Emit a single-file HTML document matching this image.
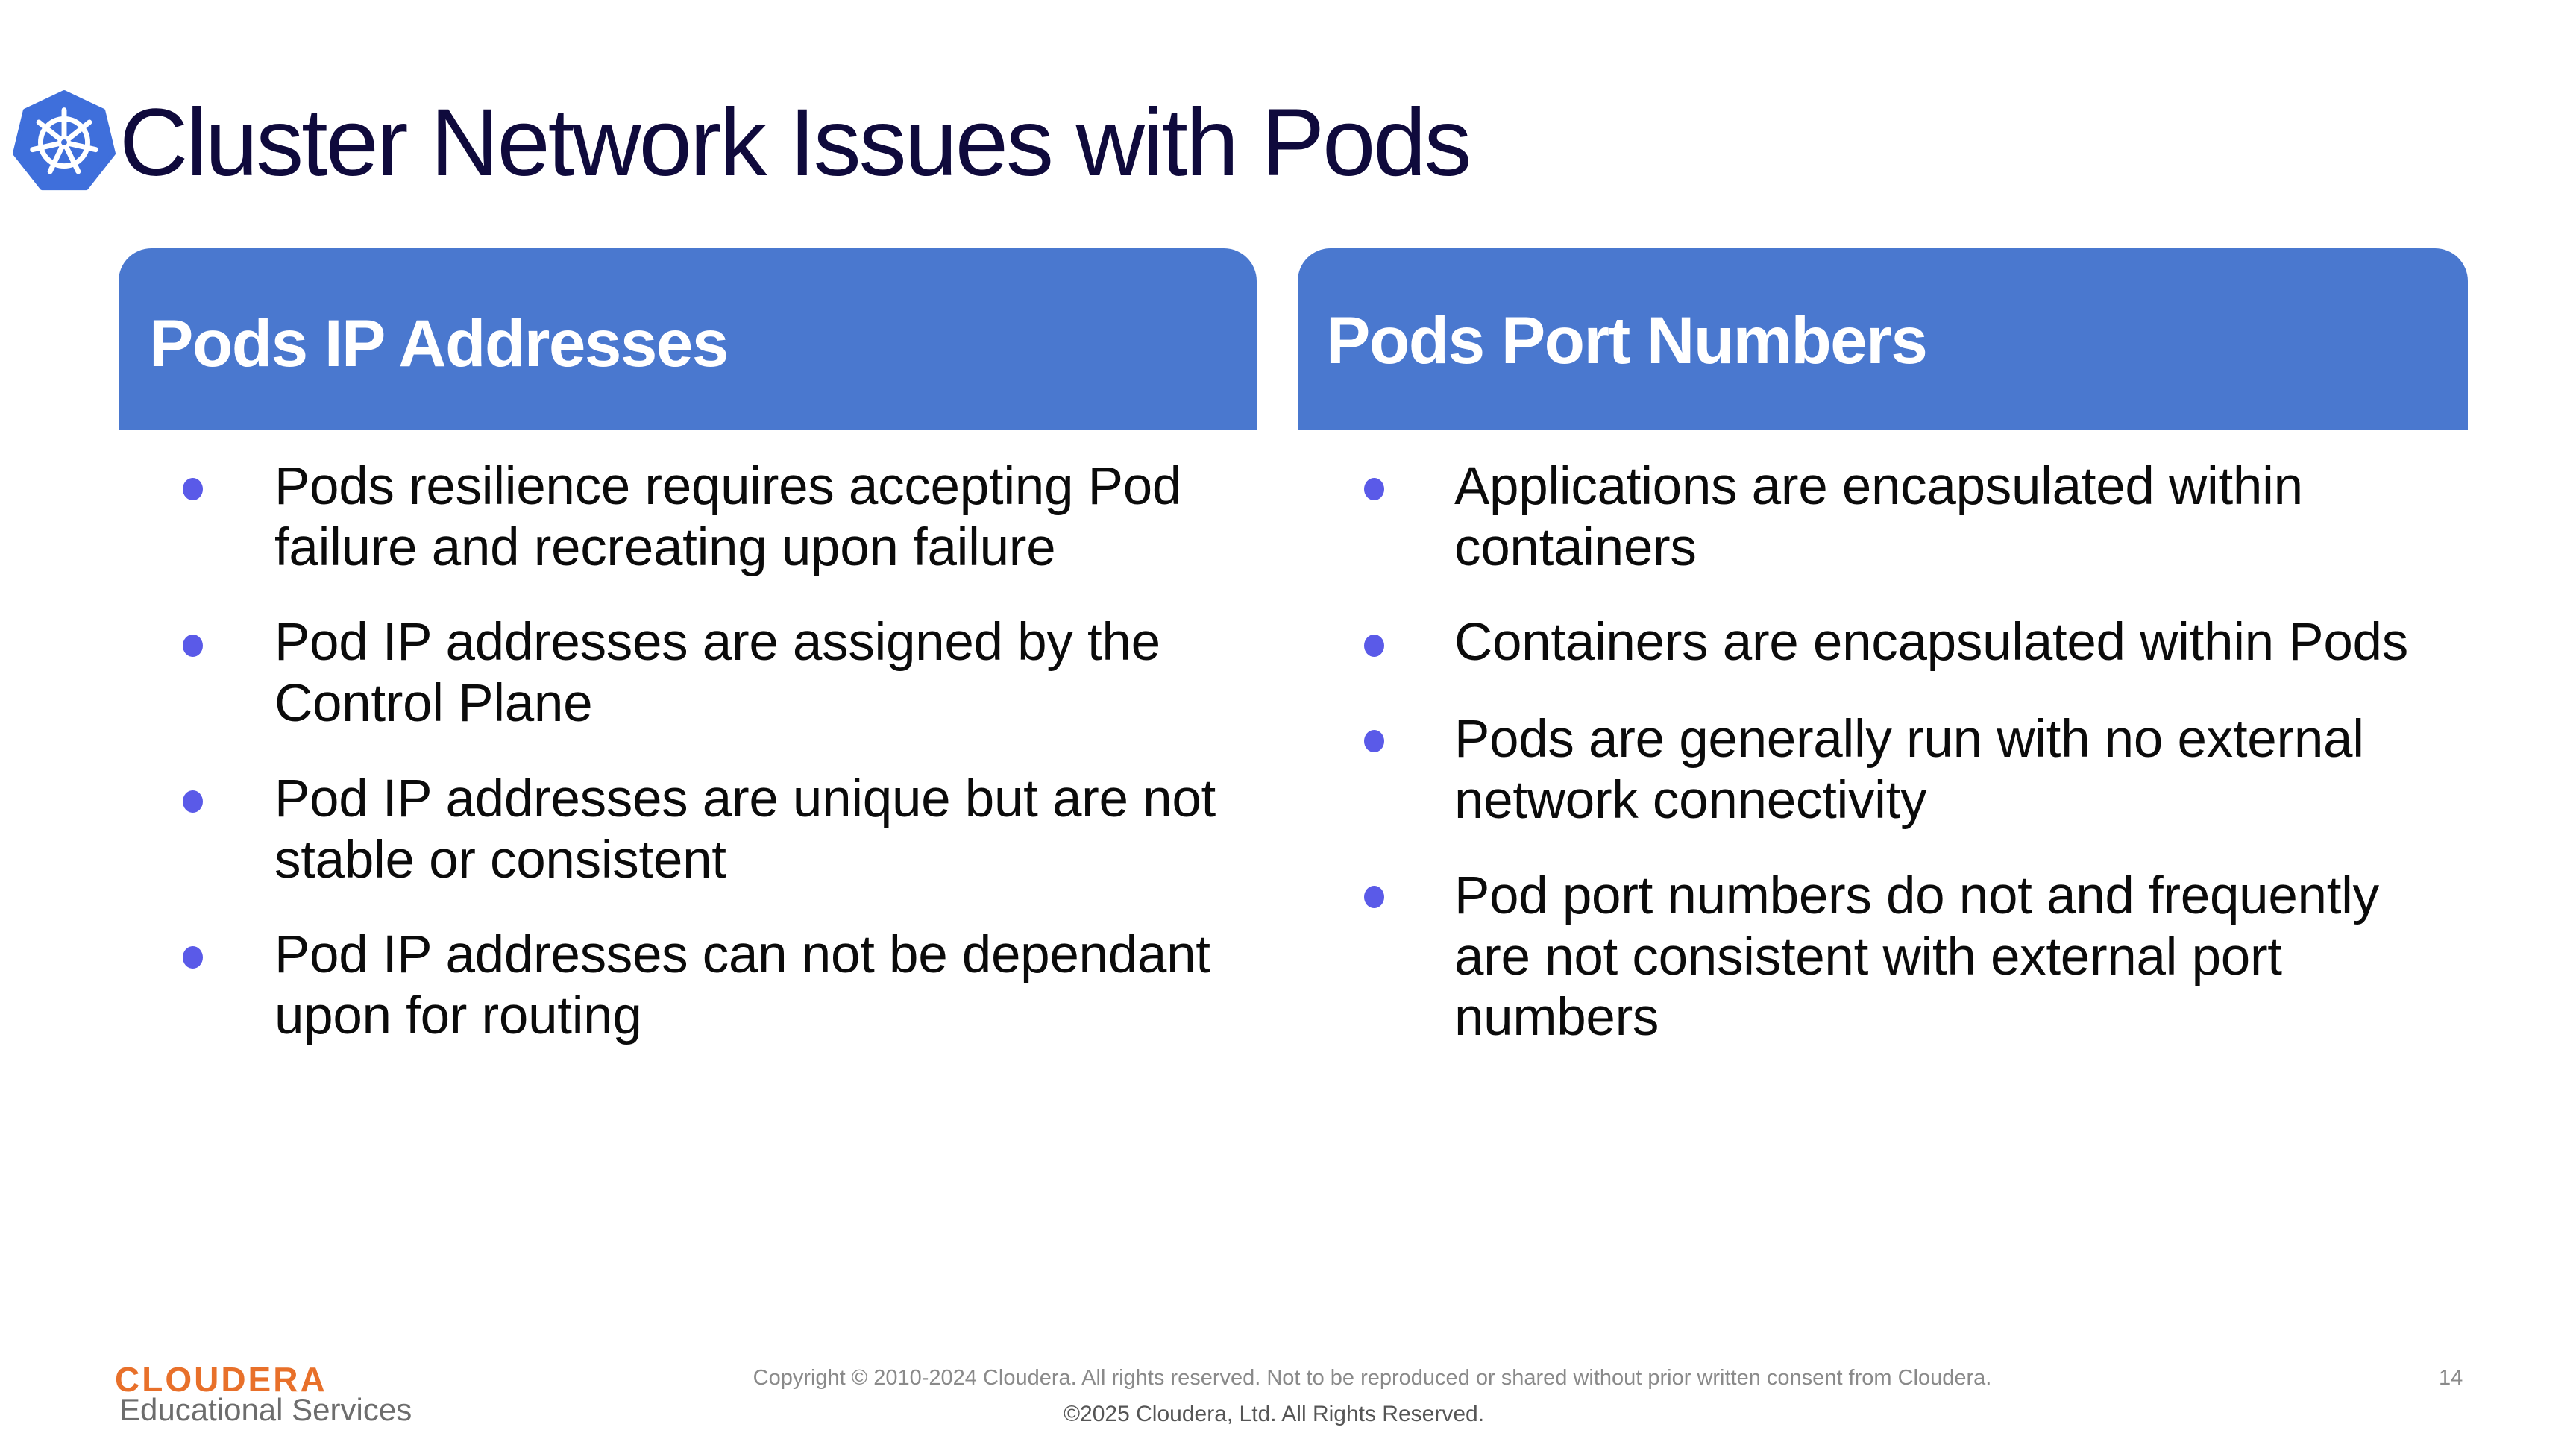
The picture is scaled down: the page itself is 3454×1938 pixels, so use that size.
<!DOCTYPE html>
<html><head><meta charset="utf-8"><style>
*{margin:0;padding:0;box-sizing:border-box}
html,body{width:3454px;height:1938px;background:#fff;overflow:hidden;font-family:"Liberation Sans",sans-serif}
.a{position:absolute;white-space:nowrap}
.title{left:160px;top:128px;font-size:128px;line-height:1;color:#0f0a3c;letter-spacing:-3px}
.hdr{position:absolute;top:333px;height:244px;background:#4a78cf;border-radius:44px 44px 0 0}
.ht{font-size:89px;font-weight:bold;color:#fff;line-height:1;letter-spacing:-1.5px}
.item{position:absolute;font-size:71px;line-height:81.5px;color:#0b0b0b;letter-spacing:-0.3px;white-space:nowrap}
.dot{position:absolute;width:27px;height:30px;border-radius:50%;background:#5a5ae8}
</style></head><body>
<svg class="a" style="left:16px;top:120px" width="140" height="140" viewBox="0 0 142 142">
<polygon points="71,4 124,29 138,87 101,134 41,134 4,87 18,29" fill="#3f6fdb" stroke="#3f6fdb" stroke-width="6" stroke-linejoin="round"/>
<g stroke="#fff" stroke-width="7" stroke-linecap="round" fill="none">
<circle cx="71" cy="72" r="32"/>
<line x1="71" y1="72" x2="71" y2="28"/>
<line x1="71" y1="72" x2="105.4" y2="44.6"/>
<line x1="71" y1="72" x2="113.9" y2="81.8"/>
<line x1="71" y1="72" x2="90.1" y2="111.6"/>
<line x1="71" y1="72" x2="51.9" y2="111.6"/>
<line x1="71" y1="72" x2="28.1" y2="81.8"/>
<line x1="71" y1="72" x2="36.6" y2="44.6"/>
</g>
<circle cx="71" cy="72" r="9" fill="#fff"/><circle cx="71" cy="72" r="4" fill="#3f6fdb"/>
</svg>
<div class="a title">Cluster Network Issues with Pods</div>

<div class="hdr" style="left:159px;width:1526px"></div>
<div class="a ht" style="left:200px;top:416px">Pods IP Addresses</div>
<div class="hdr" style="left:1740px;width:1569px"></div>
<div class="a ht" style="left:1778px;top:412px">Pods Port Numbers</div>

<div class="dot" style="left:245px;top:641px"></div>
<div class="item" style="left:368px;top:612px">Pods resilience requires accepting Pod<br>failure and recreating upon failure</div>
<div class="dot" style="left:245px;top:851px"></div>
<div class="item" style="left:368px;top:821px">Pod IP addresses are assigned by the<br>Control Plane</div>
<div class="dot" style="left:245px;top:1060px"></div>
<div class="item" style="left:368px;top:1031px">Pod IP addresses are unique but are not<br>stable or consistent</div>
<div class="dot" style="left:245px;top:1269px"></div>
<div class="item" style="left:368px;top:1240px">Pod IP addresses can not be dependant<br>upon for routing</div>

<div class="dot" style="left:1829px;top:641px"></div>
<div class="item" style="left:1950px;top:612px">Applications are encapsulated within<br>containers</div>
<div class="dot" style="left:1829px;top:851px"></div>
<div class="item" style="left:1950px;top:821px">Containers are encapsulated within Pods</div>
<div class="dot" style="left:1829px;top:979px"></div>
<div class="item" style="left:1950px;top:951px">Pods are generally run with no external<br>network connectivity</div>
<div class="dot" style="left:1829px;top:1188px"></div>
<div class="item" style="left:1950px;top:1161px">Pod port numbers do not and frequently<br>are not consistent with external port<br>numbers</div>

<div class="a" style="left:154px;top:1827px;font-size:46px;font-weight:bold;color:#e8702a;letter-spacing:3px;line-height:1">CLOUDERA</div>
<div class="a" style="left:160px;top:1870px;font-size:42px;color:#6d6d6d;line-height:1">Educational Services</div>
<div class="a" style="left:113px;width:3454px;text-align:center;top:1834px;font-size:29px;color:#8a8a8a;line-height:1">Copyright © 2010-2024 Cloudera. All rights reserved. Not to be reproduced or shared without prior written consent from Cloudera.</div>
<div class="a" style="left:-19px;width:3454px;text-align:center;top:1882px;font-size:30px;color:#555;line-height:1">©2025 Cloudera, Ltd. All Rights Reserved.</div>
<div class="a" style="left:3270px;top:1834px;font-size:29px;color:#8a8a8a;line-height:1">14</div>
</body></html>
